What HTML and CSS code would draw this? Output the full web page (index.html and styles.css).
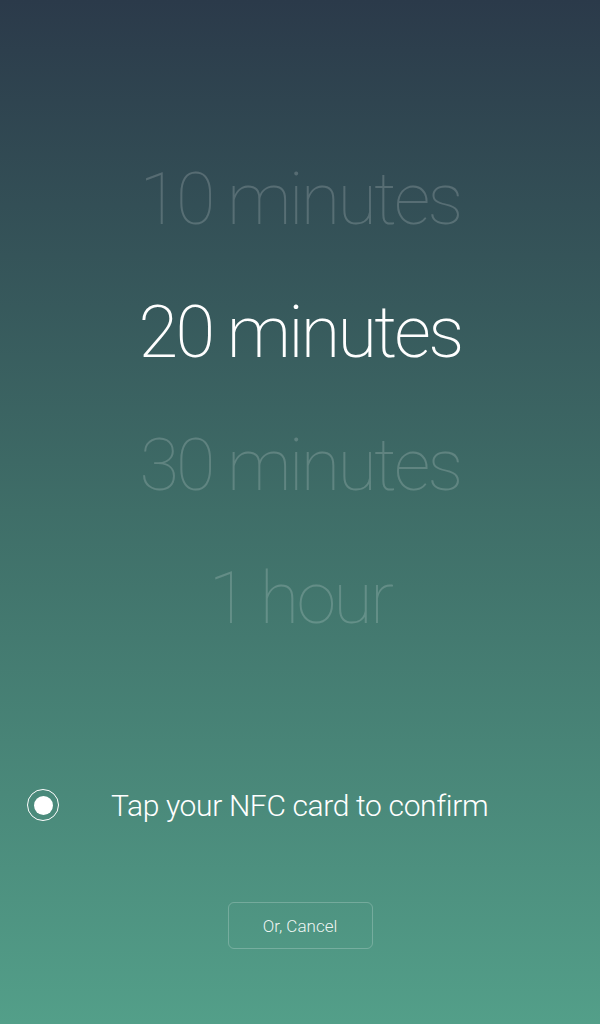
FILE: index.html
```html
<!DOCTYPE html>
<html>
<head>
<meta charset="utf-8">
<link rel="stylesheet" href="styles.css">
</head>
<body>
<main class="screen">
  <ul class="picker">
    <li class="option">10 minutes</li>
    <li class="option selected">20 minutes</li>
    <li class="option">30 minutes</li>
    <li class="option">1 hour</li>
  </ul>
  <div class="nfc">
    <span class="radio"><span class="dot"></span></span>
    <span class="nfc-text">Tap your NFC card to confirm</span>
  </div>
  <div class="actions">
    <button class="cancel">Or, Cancel</button>
  </div>
</main>
</body>
</html>
```
FILE: styles.css
```css
html, body {
  margin: 0;
  padding: 0;
}
body {
  width: 600px;
  height: 1024px;
  overflow: hidden;
  font-family: Roboto, "Liberation Sans", sans-serif;
  font-weight: 300;
  background: linear-gradient(to bottom, #2b3a4a 0%, #3f6e68 50%, #539f89 100%);
}
.screen {
  height: 1024px;
  display: flex;
  flex-direction: column;
}
.picker {
  list-style: none;
  margin: 0;
  padding: 133px 0 0;
}
.option {
  font-size: 72px;
  font-weight: 100;
  letter-spacing: -2.8px;
  line-height: 133px;
  height: 133px;
  text-align: center;
  color: rgba(255, 255, 255, 0.18);
  white-space: nowrap;
}
.option.selected {
  color: #ffffff;
  font-weight: 200;
}
.nfc {
  margin-top: 120px;
  height: 40px;
  display: flex;
  align-items: center;
  padding-left: 27px;
  gap: 52px;
}
.radio {
  width: 32px;
  height: 32px;
  border: 1.2px solid #ffffff;
  border-radius: 50%;
  display: flex;
  align-items: center;
  justify-content: center;
  box-sizing: border-box;
}
.dot {
  width: 19px;
  height: 19px;
  border-radius: 50%;
  background: #ffffff;
}
.nfc-text {
  font-size: 30px;
  letter-spacing: -0.35px;
  color: #ffffff;
  white-space: nowrap;
}
.actions {
  margin-top: 77px;
  display: flex;
  justify-content: center;
}
.cancel {
  width: 145px;
  height: 47px;
  border: 1px solid rgba(255, 255, 255, 0.22);
  border-radius: 6px;
  background: transparent;
  font-family: Roboto, "Liberation Sans", sans-serif;
  font-weight: 300;
  font-size: 17px;
  color: rgba(255, 255, 255, 0.92);
  padding: 0;
}
```
